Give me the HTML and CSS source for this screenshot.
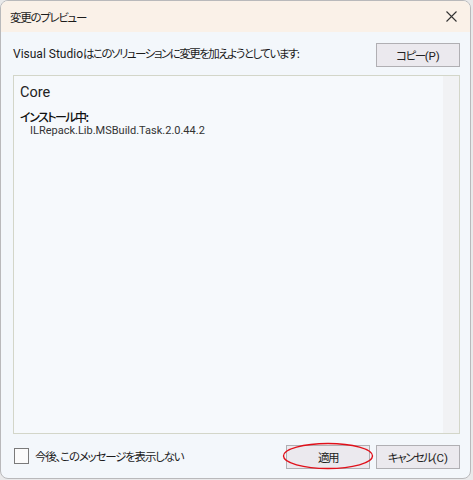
FILE: index.html
```html
<!DOCTYPE html>
<html lang="ja">
<head>
<meta charset="utf-8">
<link rel="stylesheet" href="styles.css">
</head>
<body>
<div class="window">
  <div class="titlebar">
    <span class="title ja">変更のプレビュー</span>
    <svg class="close" width="11" height="11" viewBox="0 0 11 11"><path d="M0.5 0.5 L10.5 10.5 M10.5 0.5 L0.5 10.5" stroke="#333" stroke-width="1.1" fill="none"/></svg>
  </div>
  <div class="content">
    <div class="header">
      <span class="msg">Visual Studio<span class="ja">はこのソリューションに変更を加えようとしています:</span></span>
      <button class="btn"><span class="ja">コピー</span>(P)</button>
    </div>
    <div class="box">
      <div class="box-text">
        <div class="project">Core</div>
        <div class="label ja">インストール中:</div>
        <div class="pkg">ILRepack.Lib.MSBuild.Task.2.0.44.2</div>
      </div>
      <div class="scroll"></div>
    </div>
    <div class="footer">
      <label class="check"><span class="checkbox"></span><span class="ja cb-text">今後、このメッセージを表示しない</span></label>
      <div class="buttons">
        <div class="apply-wrap">
          <button class="btn"><span class="ja">適用</span></button>
          <svg class="ellipse" width="92" height="28" viewBox="0 0 92 28"><ellipse cx="46" cy="14" rx="44.5" ry="12.5" fill="none" stroke="#e0101a" stroke-width="1.4"/></svg>
        </div>
        <button class="btn"><span class="ja">キャンセル</span>(C)</button>
      </div>
    </div>
  </div>
</div>
</body>
</html>
```
FILE: styles.css
```css
html, body {
  margin: 0;
  padding: 0;
}
body {
  background: #e9e9ea;
  width: 473px;
  height: 480px;
  font-family: Roboto, "Noto Sans CJK JP", sans-serif;
  font-size: 12px;
  color: #1b1b1b;
  font-feature-settings: "palt";
}
.ja {
  font-family: "Noto Sans CJK JP", sans-serif;
  font-feature-settings: "palt";
  font-size: 11.5px;
  letter-spacing: -1.5px;
}
.window {
  width: 469px;
  height: 477px;
  border: 1px solid #b9b9bb;
  border-radius: 8px;
  background: #f3f7fb;
  overflow: hidden;
  display: flex;
  flex-direction: column;
}
.titlebar {
  height: 31px;
  flex: none;
  background: #faf1e8;
  display: flex;
  align-items: center;
  justify-content: space-between;
  padding: 0 13px 0 9px;
}
.title {
  line-height: 16px;
  letter-spacing: -1.3px;
}
.close {
  display: block;
}
.content {
  flex: 1;
  display: flex;
  flex-direction: column;
  padding: 11px 10px 0 12px;
}
.header {
  display: flex;
  justify-content: space-between;
  align-items: center;
  height: 24px;
}
.msg {
  font-size: 12px;
  line-height: 16px;
  margin-top: -4px;
}
.btn {
  width: 84px;
  height: 24px;
  box-sizing: border-box;
  border: 1px solid #b0afb3;
  background: #ebe9ee;
  font-family: Roboto, "Noto Sans CJK JP", sans-serif;
  font-feature-settings: "palt";
  font-size: 11.5px;
  color: #222;
  padding: 0;
  line-height: 20px;
}
.box {
  margin-top: 8px;
  height: 359px;
  box-sizing: border-box;
  border: 1px solid #d3d6c9;
  background: #f6f9fc;
  display: flex;
}
.box-text {
  flex: 1;
  padding: 7px 0 0 6px;
}
.scroll {
  width: 16px;
  background: #f1f2f4;
}
.project {
  font-size: 14.5px;
  line-height: 20px;
  color: #222;
}
.label {
  font-weight: 500;
  font-size: 12px;
  line-height: 14px;
  margin-top: 7px;
  letter-spacing: -1.5px;
  color: #111;
}
.pkg {
  font-size: 11px;
  line-height: 14px;
  margin-left: 10px;
  color: #333;
}
.footer {
  margin-top: 11px;
  display: flex;
  justify-content: space-between;
  align-items: center;
}
.check {
  display: flex;
  align-items: center;
  gap: 6px;
  margin-left: 1px;
  margin-bottom: 2px;
}
.cb-text {
  font-size: 11.5px;
  letter-spacing: -1.2px;
}
.checkbox {
  width: 13px;
  height: 14px;
  border: 1px solid #7a7a7a;
  background: #fbfbfb;
}
.buttons {
  display: flex;
  gap: 6px;
}
.apply-wrap {
  position: relative;
}
.ellipse {
  position: absolute;
  left: -4px;
  top: -3px;
}
```
